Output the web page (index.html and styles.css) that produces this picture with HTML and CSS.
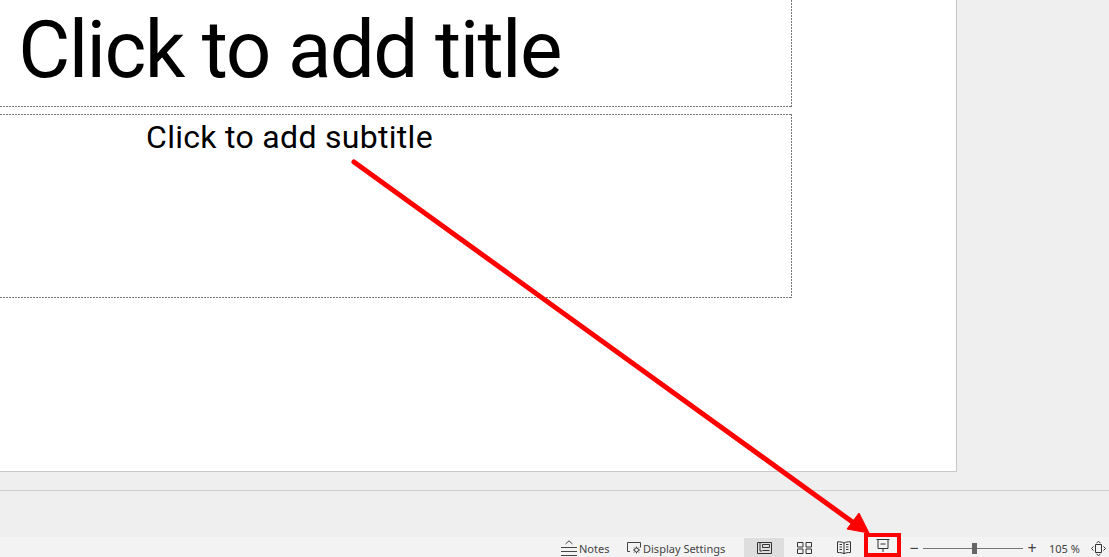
FILE: index.html
```html
<!DOCTYPE html>
<html lang="en">
<head>
<meta charset="utf-8">
<title>Slide editor</title>
<link rel="stylesheet" href="styles.css">
</head>
<body>
<div class="app">
  <main class="canvas">
    <section class="slide">
      <div class="placeholder title-box"><span class="title-text">Click to add title</span></div>
      <div class="placeholder subtitle-box"><span class="subtitle-text">Click to add subtitle</span></div>
    </section>
  </main>
  <div class="notes-pane"></div>
  <footer class="status">
    <button class="tool notes-btn">
      <svg width="18" height="20" viewBox="0 0 18 20" fill="none" stroke="#444" stroke-width="1"><path d="M4.500 7 8 3.800 11.500 7M0 10.500h16M0 14.500h16M0 18.500h16"/></svg>
      <span class="label">Notes</span>
    </button>
    <button class="tool display-btn">
      <svg width="17" height="20" viewBox="0 0 17 20" fill="none" stroke="#444" stroke-width="1"><path d="M4 14.500H1.500v-9h13v5"/><circle cx="10.500" cy="13" r="2"/><path d="M10.500 9.500V11M10.500 15v1.500M7 13h1.500M12.500 13H14M8 10.500l1 1M12 14.500l1 1M13 10.500l-1 1M9 14.500l-1 1"/></svg>
      <span class="label">Display Settings</span>
    </button>
    <div class="views">
      <button class="view active">
        <svg width="15" height="12" viewBox="0 0 15 12" fill="none" stroke="#333" stroke-width="1"><path d="M.5.500h14v11H.5zM5.500 2.500h7v3h-7zM5.500 8.500h7M3 .5v8.500h2"/></svg>
      </button>
      <button class="view">
        <svg width="15" height="12" viewBox="0 0 15 12" fill="none" stroke="#333" stroke-width="1"><path d="M.5.500h5.500v4.500H.5zM9 .5h5.500v4.500H9zM.5 7h5.500v4.500H.5zM9 7h5.500v4.500H9z"/></svg>
      </button>
      <button class="view">
        <svg width="14" height="13" viewBox="0 0 14 13" fill="none" stroke="#333" stroke-width="1"><path d="M7 2C5.500 1 3 .8.500.8v10.700c2.500 0 5 .2 6.500 1.200 1.500-1 4-1.200 6.500-1.200V.8C11 .8 8.500 1 7 2zM7 2v10.500M2.500 3.500h2.500M2.500 6h2.500M2.500 8.500h2.500M9 3.500h2.500M9 6h2.500M9 8.500h2.500"/></svg>
      </button>
      <button class="view show">
        <svg width="14" height="13" viewBox="0 0 14 13" fill="none" stroke="#333" stroke-width="1"><path d="M.5.500h13M2 .5v9h10v-9M7 9.500v3.500M4.500 5h5"/></svg>
      </button>
    </div>
    <div class="zoom">
      <span class="zoom-sign">−</span>
      <div class="slider"><span class="thumb"></span></div>
      <span class="zoom-sign">+</span>
      <span class="zoom-value">105 %</span>
      <svg class="fit" width="15" height="15" viewBox="0 0 15 15" fill="none" stroke="#333" stroke-width="1"><path d="M4.500 3.500h6v8h-6zM5.500 2l2-1.500 2 1.500M5.500 13l2 1.500 2-1.500M2.500 5.500l-2 2 2 2M12.500 5.500l2 2-2 2"/></svg>
    </div>
  </footer>
  <svg class="arrow" width="1109" height="557" viewBox="0 0 1109 557" aria-hidden="true">
    <path d="M354 162 858 526" stroke="#fe0000" stroke-width="5" stroke-linecap="round" fill="none"/>
    <path d="M869 533 847 529 859 513z" fill="#fe0000" stroke="#fe0000" stroke-width="1"/>
  </svg>
</div>
</body>
</html>
```
FILE: styles.css
```css
* { box-sizing: border-box; }
html, body { margin: 0; padding: 0; }
body { font-family: "Noto Sans", "Liberation Sans", sans-serif; overflow: hidden; }
.app { position: relative; width: 1109px; height: 557px; display: flex; flex-direction: column; background: #efefef; overflow: hidden; }
.canvas { height: 490px; flex: none; }
.slide { width: 957px; height: 472px; background: #fff; border-right: 1px solid #c8c8c8; border-bottom: 1px solid #c8c8c8; display: flex; flex-direction: column; gap: 7px; }
.placeholder {
  width: 1005px; margin-left: -213px; display: flex; justify-content: center;
  --dash-x: repeating-linear-gradient(90deg, #777 0 2px, transparent 2px 3px);
  --dash-y: repeating-linear-gradient(180deg, #777 0 2px, transparent 2px 3px);
}
.title-box {
  height: 107px; align-items: flex-end; padding-bottom: 12px;
  background: var(--dash-x) left bottom / 100% 1px no-repeat, var(--dash-y) right top / 1px 100% no-repeat;
}
.subtitle-box {
  height: 184px; padding-top: 3px;
  background: var(--dash-x) left top / 100% 1px no-repeat, var(--dash-x) left bottom / 100% 1px no-repeat, var(--dash-y) right top / 1px 100% no-repeat;
}
.title-text { font-family: Roboto, sans-serif; font-size: 80px; letter-spacing: -1.6px; line-height: 90px; color: #000; white-space: nowrap; }
.subtitle-text { font-family: Roboto, sans-serif; font-size: 32px; letter-spacing: 0.3px; line-height: 40px; color: #000; white-space: nowrap; }
.notes-pane { height: 47px; flex: none; border-top: 1px solid #d0d0d0; }
.status { height: 20px; flex: none; background: #f3f3f3; display: flex; align-items: center; padding-left: 561px; }
.tool { border: 0; background: none; padding: 0; display: flex; align-items: center; font: 11px "Noto Sans", sans-serif; color: #444; height: 20px; }
.label { padding-top: 2px; }
.notes-btn { width: 65px; }
.display-btn { width: 118px; }
.views { display: flex; height: 19px; margin-top: 1px; }
.view { width: 40px; height: 19px; border: 0; background: none; padding: 0; display: flex; align-items: center; justify-content: center; }
.view.active { background: #dedede; }
.view.show { width: 37px; height: 24px; margin-top: -5px; outline: 4px solid #fe0000; outline-offset: -4px; padding-top: 1px; flex: none; }
.zoom { display: flex; align-items: center; margin-left: 8px; color: #444; font-size: 11px; }
.zoom-sign { width: 10px; font-size: 16px; line-height: 20px; text-align: center; padding-top: 1px; }
.slider { width: 100px; height: 1px; background: #777; margin: 2px 4px 0; display: flex; justify-content: center; align-items: center; }
.thumb { width: 5px; height: 11px; background: #666; flex: none; margin-left: 2px; }
.zoom-value { margin-left: 12px; width: 37px; padding-top: 2px; }
.fit { margin-left: 5px; margin-top: 2px; }
.arrow { position: absolute; left: 0; top: 0; pointer-events: none; }
```
